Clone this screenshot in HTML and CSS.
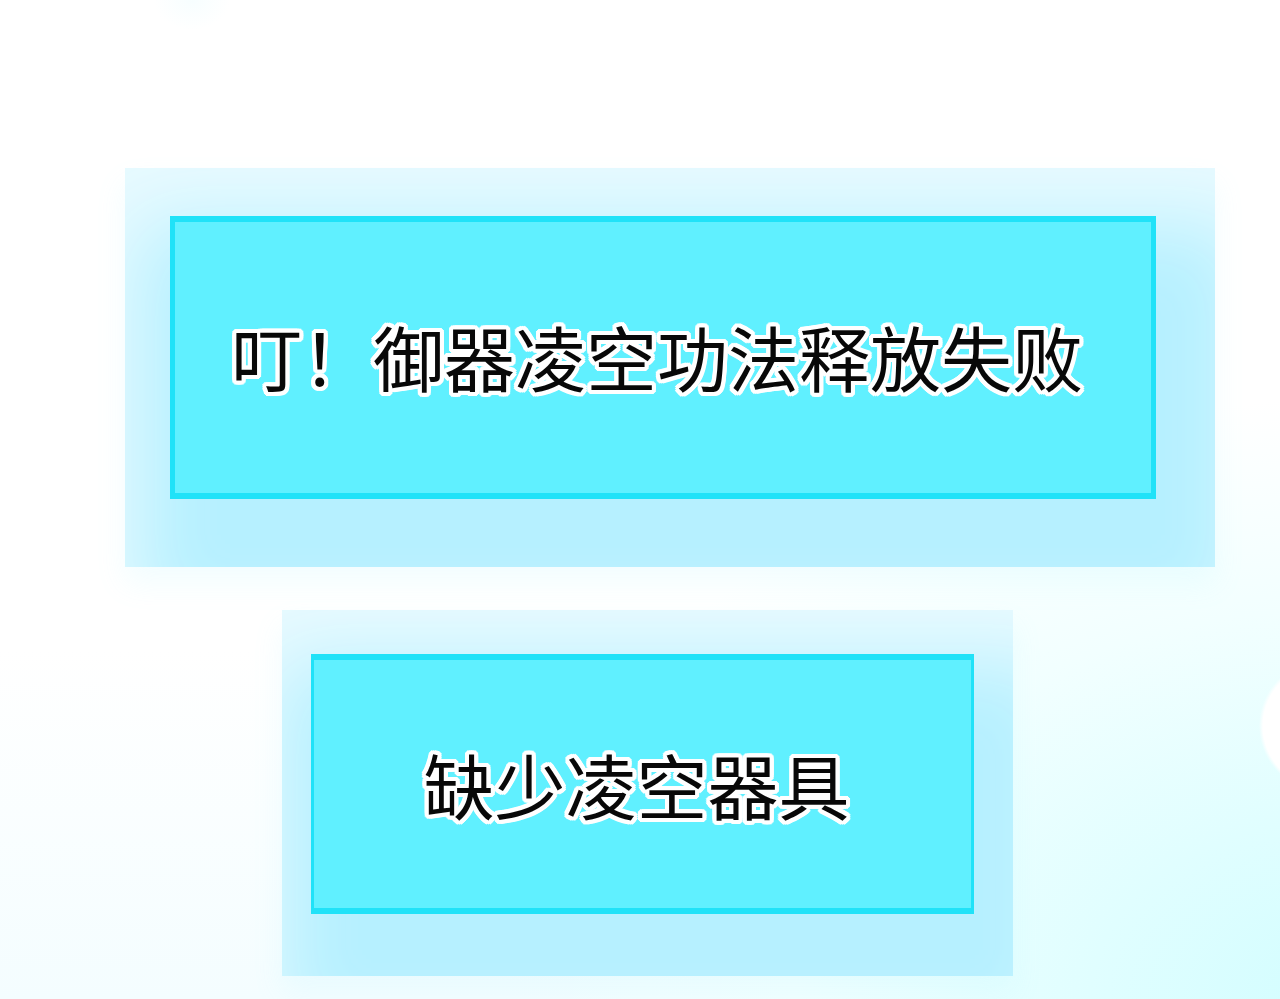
FILE: index.html
```html
<!DOCTYPE html>
<html lang="zh-CN">
<head>
    <meta charset="UTF-8">
    <meta name="viewport" content="width=device-width, initial-scale=1.0">
    <title>系统提示</title>
    <link rel="stylesheet" href="styles.css">
</head>
<body>
    <main class="scene">
        <section class="panel panel-large">
            <div class="panel-box">
                <p class="panel-text">叮！御器凌空功法释放失败</p>
            </div>
        </section>
        <section class="panel panel-small">
            <div class="panel-box">
                <p class="panel-text">缺少凌空器具</p>
            </div>
        </section>
    </main>
</body>
</html>
```
FILE: styles.css
```css
* {
    box-sizing: border-box;
}

body {
    margin: 0;
    font-family: "Noto Sans CJK SC", sans-serif;
    background-color: #fff;
}

.scene {
    display: flex;
    flex-direction: column;
    gap: 43px;
    min-height: 100vh;
    padding: 168px 65px 23px 125px;
    overflow: hidden;
    /* white bubble on the right edge, then the soft cyan haze */
    background:
        radial-gradient(circle at calc(100% + 45px) 726px, #fff 62px, transparent 66px),
        radial-gradient(ellipse 66% 60% at 105% 100%, #d2fdff 0%, #e0feff 30%, #f2ffff 65%, transparent 100%),
        radial-gradient(ellipse 3% 3% at 15% 0%, #f7feff, transparent),
        linear-gradient(to bottom, #fff 65%, #f4fdff 100%);
}

.panel {
    background-color: #e8faff;
    overflow: hidden;
    box-shadow: 0 16px 28px rgba(150, 235, 255, 0.12);
}

.panel-large {
    padding: 48px 59px 68px 45px;
}

.panel-small {
    margin: 0 202px 0 157px;
    padding: 44px 39px 62px 29px;
}

.panel-box {
    display: flex;
    justify-content: center;
    background-color: #60f0ff;
    border: 6px solid #20e2f8;
    box-shadow: 28px 68px 76px 60px #b6f0ff;
}

.panel-large .panel-box {
    padding: 81px 12px 86px 0;
    border-left-width: 5px;
    border-right-width: 5px;
}

.panel-small .panel-box {
    padding: 71px 12px 73px 0;
    border-left-width: 3px;
    border-right-width: 3px;
}

/* Black letters with a white outline */
.panel-text {
    margin: 0;
    font-size: 71px;
    line-height: 104px;
    white-space: nowrap;
    color: #080808;
    text-shadow:
        4px 0 #fff, -4px 0 #fff, 0 4px #fff, 0 -4px #fff,
        3px 3px #fff, -3px 3px #fff, 3px -3px #fff, -3px -3px #fff,
        4px 2px #fff, -4px 2px #fff, 4px -2px #fff, -4px -2px #fff,
        2px 4px #fff, -2px 4px #fff, 2px -4px #fff, -2px -4px #fff;
}
```
